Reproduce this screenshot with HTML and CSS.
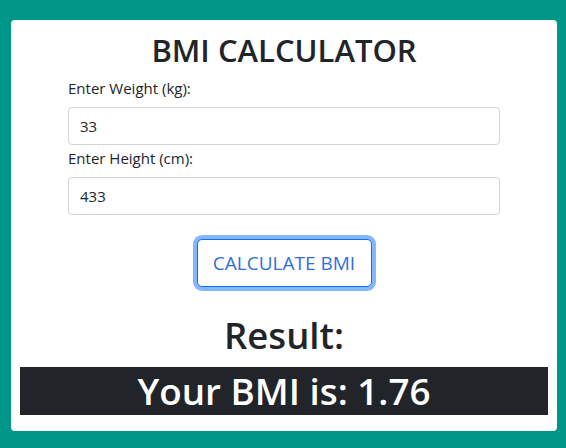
FILE: index.html
```html
<!DOCTYPE html>
<html lang="en">
<head>
<meta charset="utf-8">
<title>BMI Calculator</title>
<link rel="stylesheet" href="styles.css">
</head>
<body>
<div class="card">
  <h2 class="title">BMI CALCULATOR</h2>
  <form class="form">
    <label class="label" for="weight">Enter Weight (kg):</label>
    <input class="input" id="weight" type="text" value="33">
    <label class="label label-second" for="height">Enter Height (cm):</label>
    <input class="input" id="height" type="text" value="433">
    <div class="actions">
      <button type="button" class="btn">CALCULATE BMI</button>
    </div>
  </form>
  <h1 class="result-title">Result:</h1>
  <div class="result-bar">Your BMI is: 1.76</div>
</div>
</body>
</html>
```

FILE: styles.css
```css
* { box-sizing: border-box; }
html, body {
  margin: 0;
  padding: 0;
}
body {
  background: #009688;
  font-family: "Open Sans", "Noto Sans", sans-serif;
  color: #212529;
  height: 448px;
  overflow: hidden;
}
.card {
  background: #fff;
  margin: 20px 9px 0 11px;
  height: 411px;
  border-radius: 4px;
  padding: 11px 9px 16px 9px;
}
.title {
  margin: 0 0 7px 0;
  text-align: center;
  font-size: 31px;
  font-weight: 600;
  line-height: 38px;
}
.form {
  width: 432px;
  margin: 0 auto;
  display: flex;
  flex-direction: column;
}
.label {
  font-size: 15px;
  line-height: 24px;
  margin-bottom: 7px;
}
.label-second {
  margin-top: 1px;
}
.input {
  height: 38px;
  width: 100%;
  border: 1px solid #ced4da;
  border-radius: 4px;
  padding: 0 11px;
  font-family: inherit;
  font-size: 15px;
  color: #212529;
  background: #fff;
}
.actions {
  display: flex;
  justify-content: center;
  margin-top: 24px;
}
.btn {
  height: 48px;
  width: 175px;
  padding: 0;
  white-space: nowrap;
  border: 1px solid #0d6efd;
  border-radius: 5px;
  background: #fff;
  color: #2f6fdc;
  font-family: inherit;
  font-size: 19px;
  box-shadow: 0 0 0 4px #86b7fe;
  cursor: pointer;
}
.result-title {
  margin: 24px 0 8px 0;
  text-align: center;
  font-size: 36.5px;
  font-weight: 600;
  line-height: 48px;
}
.result-bar {
  background: #212529;
  color: #fff;
  text-align: center;
  font-size: 36.8px;
  font-weight: 600;
  line-height: 48px;
  height: 48px;
}
```
